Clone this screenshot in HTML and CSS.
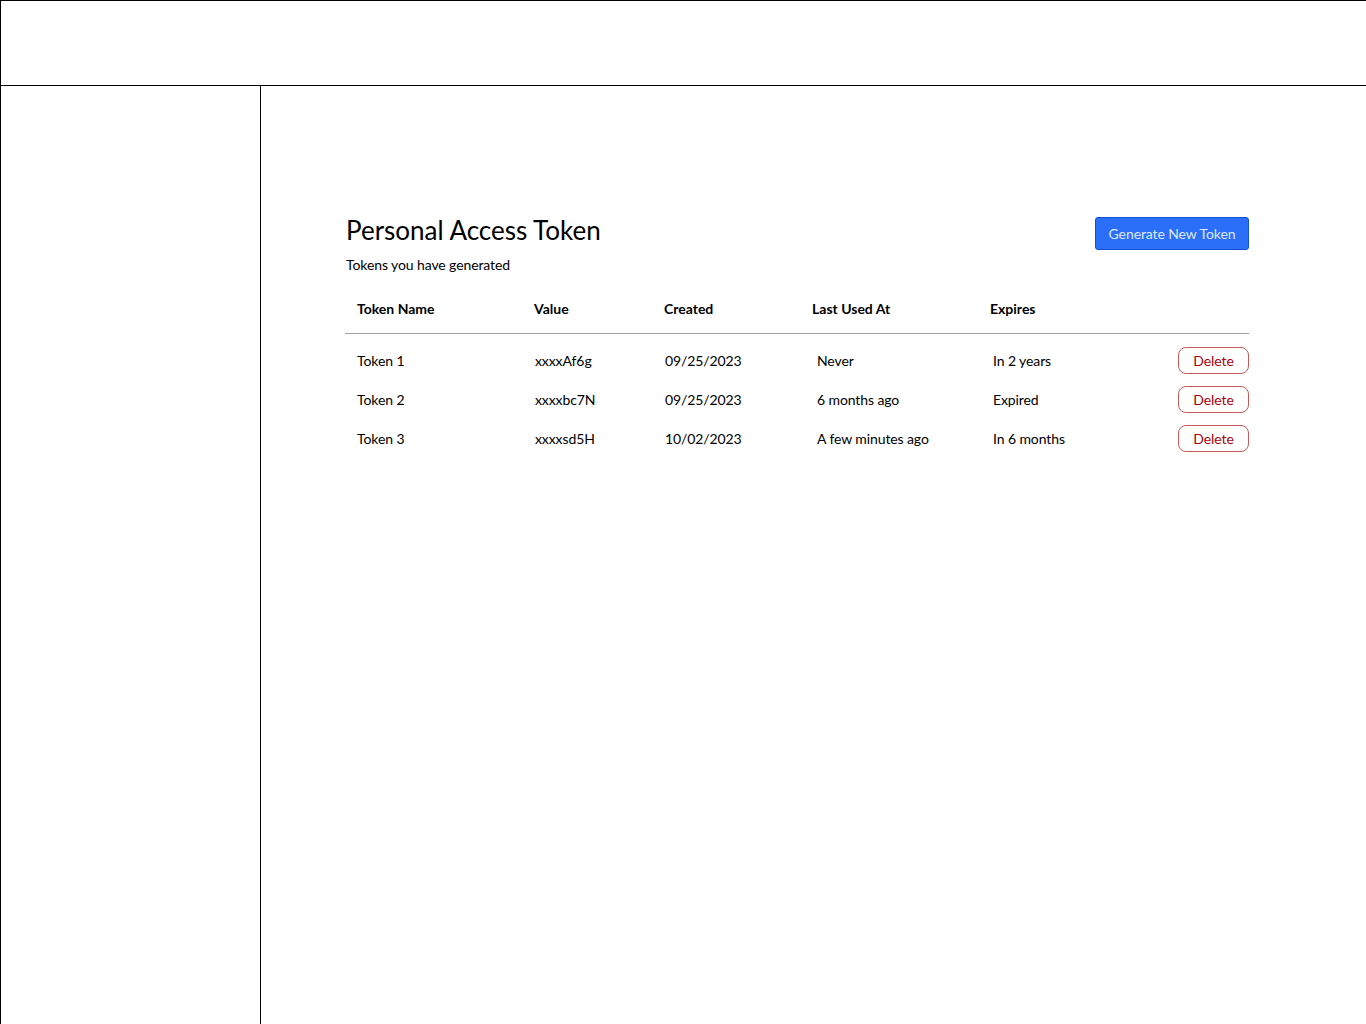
FILE: index.html
```html
<!DOCTYPE html>
<html lang="en">
<head>
<meta charset="utf-8">
<title>Personal Access Token</title>
<link rel="stylesheet" href="styles.css">
</head>
<body>
<header class="topbar"></header>
<div class="layout">
  <aside class="sidebar"></aside>
  <main class="main">
    <div class="page-head">
      <div class="titles">
        <h1 class="title">Personal Access Token</h1>
        <p class="subtitle">Tokens you have generated</p>
      </div>
      <button class="btn-primary">Generate New Token</button>
    </div>
    <div class="table">
      <div class="row head">
        <div class="cell c1">Token Name</div>
        <div class="cell c2">Value</div>
        <div class="cell c3">Created</div>
        <div class="cell c4">Last Used At</div>
        <div class="cell c5">Expires</div>
        <div class="cell c6"></div>
      </div>
      <div class="body">
        <div class="row">
          <div class="cell c1">Token 1</div>
          <div class="cell c2">xxxxAf6g</div>
          <div class="cell c3">09/25/2023</div>
          <div class="cell c4">Never</div>
          <div class="cell c5">In 2 years</div>
          <div class="cell c6"><button class="btn-delete">Delete</button></div>
        </div>
        <div class="row">
          <div class="cell c1">Token 2</div>
          <div class="cell c2">xxxxbc7N</div>
          <div class="cell c3">09/25/2023</div>
          <div class="cell c4">6 months ago</div>
          <div class="cell c5">Expired</div>
          <div class="cell c6"><button class="btn-delete">Delete</button></div>
        </div>
        <div class="row">
          <div class="cell c1">Token 3</div>
          <div class="cell c2">xxxxsd5H</div>
          <div class="cell c3">10/02/2023</div>
          <div class="cell c4">A few minutes ago</div>
          <div class="cell c5">In 6 months</div>
          <div class="cell c6"><button class="btn-delete">Delete</button></div>
        </div>
      </div>
    </div>
  </main>
</div>
</body>
</html>
```
FILE: styles.css
```css
* { box-sizing: border-box; }
html, body { margin: 0; padding: 0; background: #fff; }
body {
  font-family: Lato, "Open Sans", Arial, sans-serif;
  color: #000;
  font-size: 14px;
  letter-spacing: -0.1px;
  width: 1366px;
  height: 1024px;
  overflow: hidden;
}
.topbar {
  height: 86px;
  border-top: 1px solid #000;
  border-left: 1px solid #000;
  border-bottom: 1px solid #000;
}
.layout {
  display: flex;
  height: 938px;
}
.sidebar {
  width: 261px;
  flex: 0 0 261px;
  border-left: 1px solid #000;
  border-right: 1px solid #000;
}
.main {
  flex: 1;
  padding: 131px 117px 0 84px;
}
.page-head {
  display: flex;
  justify-content: space-between;
  align-items: flex-start;
}
.titles { padding-left: 1px; }
.title {
  margin: 0;
  font-size: 26px;
  font-weight: 400;
  line-height: 26px;
  letter-spacing: 0;
}
.subtitle {
  margin: 12px 0 0 0;
  font-size: 14px;
  line-height: 20px;
}
.btn-primary {
  font-family: inherit;
  font-size: 14px;
  letter-spacing: -0.1px;
  width: 154px;
  height: 33px;
  background: #2b6ef7;
  color: #dde8ff;
  border: 1px solid #1450d2;
  border-radius: 3px;
  padding: 0;
}
.table {
  margin-top: 10px;
}
.row {
  display: grid;
  grid-template-columns: 177px 130px 148px 178px 200px 71px;
  align-items: center;
  height: 39px;
}
.row.head {
  height: 49px;
  padding-bottom: 2px;
  border-bottom: 1px solid #a0a0a0;
  font-weight: 700;
  letter-spacing: 0;
}
.body { padding-top: 7px; }
.cell { padding-left: 12px; white-space: nowrap; }
.body .c2 { padding-left: 13px; }
.body .c3 { padding-left: 13px; }
.body .c4 { padding-left: 17px; }
.body .c5 { padding-left: 15px; }
.cell.c6 { padding-left: 0; display: flex; justify-content: flex-end; }
.btn-delete {
  font-family: inherit;
  font-size: 14px;
  letter-spacing: -0.1px;
  width: 71px;
  height: 27px;
  padding: 0;
  background: #fff;
  color: #a8000c;
  border: 1px solid #c85a5a;
  border-radius: 8px;
}
```
